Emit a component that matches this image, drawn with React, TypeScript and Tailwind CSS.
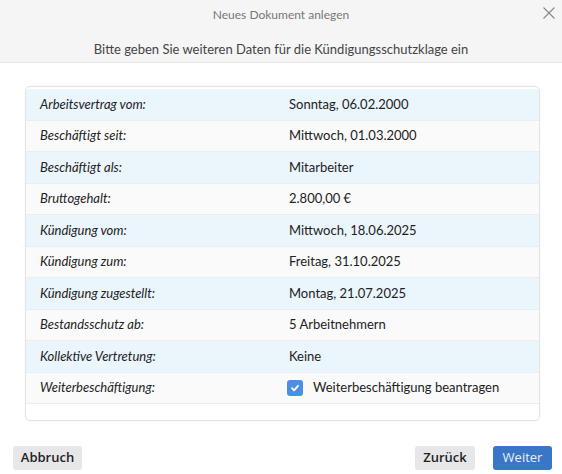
import { FC } from "react";

const rows: { label: string; value: string; checkbox?: boolean }[] = [
    { label: "Arbeitsvertrag vom:", value: "Sonntag, 06.02.2000" },
    { label: "Beschäftigt seit:", value: "Mittwoch, 01.03.2000" },
    { label: "Beschäftigt als:", value: "Mitarbeiter" },
    { label: "Bruttogehalt:", value: "2.800,00 €" },
    { label: "Kündigung vom:", value: "Mittwoch, 18.06.2025" },
    { label: "Kündigung zum:", value: "Freitag, 31.10.2025" },
    { label: "Kündigung zugestellt:", value: "Montag, 21.07.2025" },
    { label: "Bestandsschutz ab:", value: "5 Arbeitnehmern" },
    { label: "Kollektive Vertretung:", value: "Keine" },
    { label: "Weiterbeschäftigung:", value: "Weiterbeschäftigung beantragen", checkbox: true },
];

const App: FC = () => {
    return (
        <div className="w-[562px] h-[474px] bg-white flex flex-col font-['Lato','Noto_Sans',sans-serif]">
            <div className="relative h-[63px] bg-[#f5f5f5] border-b border-[#e6e6e6] flex flex-col items-center">
                <div className="mt-[6px] text-[12px] text-[#777]">Neues Dokument anlegen</div>
                <div className="mt-[16px] text-[13px] text-[#444]">
                    Bitte geben Sie weiteren Daten für die Kündigungsschutzklage ein
                </div>
                <button className="absolute right-[5px] top-[5px] text-[#888]">
                    <svg width="16" height="16" viewBox="0 0 16 16" stroke="currentColor" strokeWidth="1.1">
                        <path d="M2.5 2.5 L13.5 13.5 M13.5 2.5 L2.5 13.5" />
                    </svg>
                </button>
            </div>

            <div className="ml-[25px] mr-[22px] mt-[23px] h-[335px] rounded-[5px] border border-[#e4e4e4] pt-[2px] shadow-[0_0_2px_rgba(0,0,0,0.06)] overflow-hidden">
                {rows.map((r, i) => (
                    <div
                        key={r.label}
                        className={`flex items-center h-[31.5px] border-b border-[#e8eef2] text-[13px] text-[#222] ${
                            i % 2 === 0 ? "bg-[#eaf5fc]" : "bg-[#fafafa]"
                        }`}
                    >
                        <div className="w-[263px] pl-[14px] italic">{r.label}</div>
                        {r.checkbox ? (
                            <div className="flex items-center gap-[10px]">
                                <span className="-ml-[2px] w-[16px] h-[16px] rounded-[3px] bg-[#4a90e2] flex items-center justify-center">
                                    <svg width="10" height="10" viewBox="0 0 10 10" fill="none" stroke="white" strokeWidth="1.8" strokeLinecap="round" strokeLinejoin="round">
                                        <path d="M2 5.2 L4.1 7.3 L8 2.8" />
                                    </svg>
                                </span>
                                <span>{r.value}</span>
                            </div>
                        ) : (
                            <div>{r.value}</div>
                        )}
                    </div>
                ))}
            </div>

            <div className="flex items-center mt-[25px] pl-[13px] pr-[10px] text-[13px] font-semibold font-['Open_Sans','Noto_Sans',sans-serif]">
                <button className="h-[24px] w-[69px] rounded-[3px] bg-[#e7e7ea] text-[#222]">Abbruch</button>
                <div className="flex-1" />
                <button className="h-[24px] w-[60px] rounded-[3px] bg-[#e7e7ea] text-[#222]">Zurück</button>
                <button className="ml-[18px] h-[24px] w-[59px] rounded-[3px] bg-[#3a76c5] text-[#e8eefa] font-normal">Weiter</button>
            </div>
        </div>
    );
};

export default App;
